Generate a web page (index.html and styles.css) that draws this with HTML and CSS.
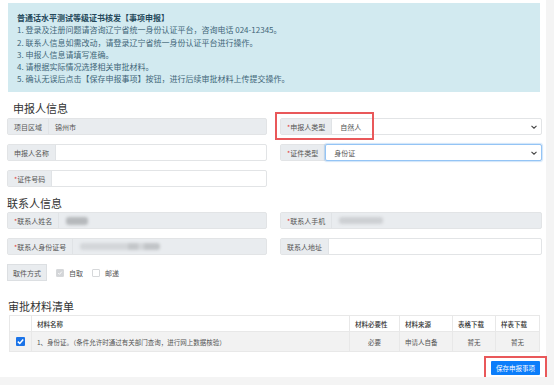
FILE: index.html
```html
<!DOCTYPE html>
<html lang="zh-CN">

<head>
    <meta charset="UTF-8" />
    <title>事项申报</title>
    <link rel="stylesheet" href="styles.css">
</head>

<body>
    <div class="page">
        <!-- Notice -->
        <div class="notice">
            <p class="notice-title">普通话水平测试等级证书核发【事项申报】</p>
            <p>1. 登录及注册问题请咨询辽宁省统一身份认证平台，咨询电话 024-12345。</p>
            <p>2. 联系人信息如需改动，请登录辽宁省统一身份认证平台进行操作。</p>
            <p>3. 申报人信息请填写准确。</p>
            <p>4. 请根据实际情况选择相关审批材料。</p>
            <p>5. 确认无误后点击【保存申报事项】按钮，进行后续审批材料上传提交操作。</p>
        </div>

        <!-- Applicant -->
        <h2 class="section-title first">申报人信息</h2>
        <div class="form-grid">
            <div class="group disabled">
                <span class="addon">项目区域</span>
                <span class="field">锦州市</span>
            </div>
            <div class="group marked">
                <span class="addon"><i>*</i>申报人类型</span>
                <span class="field select">自然人
                    <svg width="6" height="4" viewBox="0 0 6 4"><path d="M0.5 0.8 L3 3.2 L5.5 0.8" fill="none" stroke="#444" stroke-width="1.1"/></svg>
                </span>
                <span class="highlight"></span>
            </div>
            <div class="group">
                <span class="addon">申报人名称</span>
                <span class="field"></span>
            </div>
            <div class="group">
                <span class="addon"><i>*</i>证件类型</span>
                <span class="field select focus">身份证
                    <svg width="6" height="4" viewBox="0 0 6 4"><path d="M0.5 0.8 L3 3.2 L5.5 0.8" fill="none" stroke="#444" stroke-width="1.1"/></svg>
                </span>
            </div>
            <div class="group">
                <span class="addon"><i>*</i>证件号码</span>
                <span class="field"></span>
            </div>
        </div>

        <!-- Contact -->
        <h2 class="section-title second">联系人信息</h2>
        <div class="form-grid">
            <div class="group disabled">
                <span class="addon"><i>*</i>联系人姓名</span>
                <span class="field"><b class="blur name"></b></span>
            </div>
            <div class="group disabled">
                <span class="addon"><i>*</i>联系人手机</span>
                <span class="field"><b class="blur phone"></b></span>
            </div>
            <div class="group disabled">
                <span class="addon"><i>*</i>联系人身份证号</span>
                <span class="field"><b class="blur idno"></b></span>
            </div>
            <div class="group">
                <span class="addon">联系人地址</span>
                <span class="field"></span>
            </div>
            <div class="pickup">
                <span class="addon boxed">取件方式</span>
                <label class="check-item"><span class="box checked-off"><svg width="8" height="8" viewBox="0 0 8 8"><path d="M1.6 4.1 L3.3 5.8 L6.4 2.2" fill="none" stroke="#fff" stroke-width="1.2"/></svg></span>自取</label>
                <label class="check-item"><span class="box"></span>邮递</label>
            </div>
        </div>

        <!-- Materials -->
        <h2 class="section-title third">审批材料清单</h2>
        <table class="materials">
            <tr>
                <th class="col-check"></th>
                <th class="col-name">材料名称</th>
                <th class="col-need">材料必要性</th>
                <th class="col-src">材料来源</th>
                <th class="col-form">表格下载</th>
                <th class="col-sample">样表下载</th>
            </tr>
            <tr class="row-gray">
                <td class="center"><span class="box blue"><svg width="9" height="9" viewBox="0 0 9 9"><path d="M1.8 4.6 L3.8 6.5 L7.2 2.5" fill="none" stroke="#fff" stroke-width="1.5"/></svg></span></td>
                <td>1、身份证。（条件允许时通过有关部门查询，进行网上数据核验）</td>
                <td class="center">必要</td>
                <td>申请人自备</td>
                <td class="center">暂无</td>
                <td class="center">暂无</td>
            </tr>
        </table>

        <div class="actions">
            <span class="btn-wrap">
                <button class="save-btn">保存申报事项</button>
            </span>
        </div>
    </div>
</body>

</html>
```

FILE: styles.css
```css
body {
    margin: 0;
    background-color: #f4f4f4;
    font-family: "Noto Sans CJK SC", "Liberation Sans", sans-serif;
    color: #333;
}

.page {
    width: 546px;
    height: 377px;
    box-sizing: border-box;
    background-color: #fff;
    padding: 3px 0 0 7px;
}

/* Notice */
.notice {
    width: 532px;
    height: 89px;
    box-sizing: border-box;
    margin-left: 1px;
    padding: 9px 9px 0;
    background-color: #d2eaf0;
    color: #3f6678;
    font-size: 8px;
    line-height: 12.3px;
}

.notice p {
    margin: 0;
}

.notice .notice-title {
    font-weight: bold;
    color: #24485a;
}

.section-title {
    margin: 8px 0 2px;
    font-size: 11px;
    line-height: 16px;
    font-weight: normal;
    color: #333;
}

.section-title.first {
    margin-left: 6px;
}

.section-title.second {
    margin-top: 8px;
    margin-bottom: 1px;
}

.section-title.third {
    margin-top: 17px;
    margin-bottom: 1px;
    margin-left: 1px;
}

/* Form */
.form-grid {
    display: grid;
    grid-template-columns: 260px 262px;
    column-gap: 13px;
    row-gap: 9px;
}

.group {
    position: relative;
    display: flex;
    height: 17px;
    box-sizing: border-box;
    border: 1px solid #e2e4e6;
    border-radius: 2px;
    background-color: #fff;
}

.addon {
    display: flex;
    align-items: center;
    padding: 0 6px;
    background-color: #e9ecef;
    border-right: 1px solid #e0e3e6;
    font-size: 7px;
    color: #555;
    white-space: nowrap;
}

.addon i {
    font-style: normal;
    color: #e0423d;
}

.field {
    flex: 1;
    display: flex;
    align-items: center;
    padding: 0 6px;
    font-size: 7px;
    color: #555;
}

.group.disabled {
    background-color: #e9ecef;
}

.select {
    justify-content: space-between;
    padding-left: 8px;
    padding-right: 4px;
}

.select.focus {
    margin: -1px -1px -1px 0;
    border: 1px solid #94c4f5;
    border-radius: 2px;
    box-shadow: 0 0 1px 1px rgba(120, 180, 240, 0.35);
}

.highlight {
    position: absolute;
    left: -6px;
    top: -7px;
    width: 95px;
    height: 24px;
    border: 2px solid #e9585a;
    pointer-events: none;
}

.blur {
    display: block;
    height: 7px;
    border-radius: 3px;
    filter: blur(1.6px);
}

.blur.name {
    width: 22px;
    height: 8px;
    margin-left: 1px;
    background-color: #b6b9bc;
}

.blur.phone {
    width: 44px;
    margin-left: 1px;
    background-color: #cdd0d3;
}

.blur.idno {
    width: 80px;
    margin-left: 1px;
    background: linear-gradient(90deg, #d3d6d9 0 60%, #c3c6c9 60% 72%, #d3d6d9 72% 80%, #c1c4c7 80%);
}

/* Pickup row */
.pickup {
    display: flex;
    align-items: center;
    gap: 9px;
    height: 17px;
}

.addon.boxed {
    height: 17px;
    box-sizing: border-box;
    border: 1px solid #dcdfe2;
    padding: 0 5px;
}

.check-item {
    display: flex;
    align-items: center;
    gap: 5px;
    font-size: 7px;
    color: #555;
}

.box {
    display: flex;
    align-items: center;
    justify-content: center;
    width: 8px;
    height: 8px;
    box-sizing: border-box;
    border: 1px solid #d6d8da;
    border-radius: 1px;
    background-color: #fff;
}

.box.checked-off {
    background-color: #d3d5d8;
}

.box.blue {
    width: 9px;
    height: 9px;
    border: none;
    background-color: #1a73e8;
    margin: 0 auto;
}

/* Materials table */
.materials {
    width: 531px;
    margin-left: 2px;
    border-collapse: collapse;
    table-layout: fixed;
    font-size: 6.5px;
}

.materials th,
.materials td {
    box-sizing: border-box;
    border: 1px solid #e8e8e8;
    padding: 0 5px;
    text-align: left;
    white-space: nowrap;
}

.materials th {
    height: 16px;
    font-weight: 500;
    color: #333;
}

.materials td {
    height: 20px;
    color: #555;
}

.materials .center {
    text-align: center;
}

.row-gray td {
    background-color: #f2f2f2;
}

.col-check { width: 22px; }
.col-need { width: 50px; }
.col-src { width: 53px; }
.col-form { width: 43px; }
.col-sample { width: 44px; }

/* Actions */
.actions {
    display: flex;
    justify-content: flex-end;
    width: 540px;
    margin-top: 4px;
}

.btn-wrap {
    display: flex;
    padding: 3px 5px;
    border: 2px solid #e9585a;
}

.save-btn {
    width: 49px;
    height: 14px;
    padding: 0;
    border: none;
    border-radius: 1px;
    background-color: #0b7dfa;
    color: #fff;
    font-family: "Noto Sans CJK SC", sans-serif;
    font-size: 6.5px;
}
```
